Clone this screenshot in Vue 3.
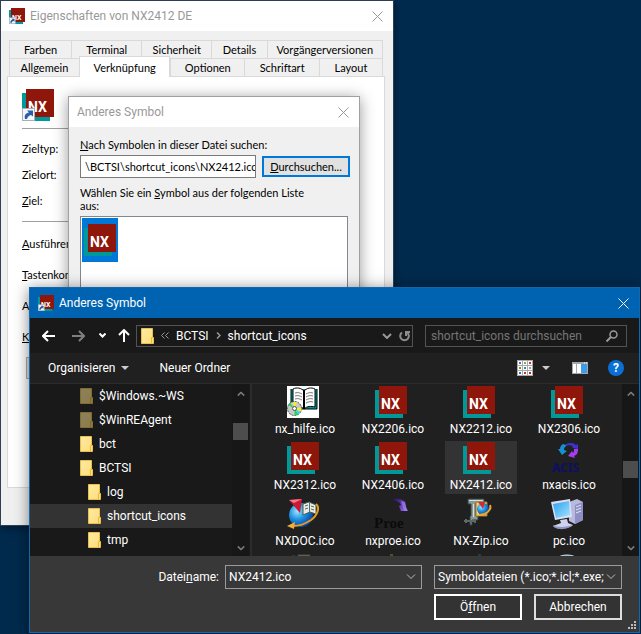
<template>
  <main class="desktop">
    <!-- 共用图标 -->
    <svg class="sprite" width="0" height="0" aria-hidden="true">
      <defs>
        <linearGradient id="folder-fill" x1="0" y1="0" x2="1" y2="1">
          <stop offset="0" stop-color="#ffeaa5" />
          <stop offset="1" stop-color="#ffdc78" />
        </linearGradient>
        <radialGradient id="globe-fill" cx="0.35" cy="0.35" r="0.7">
          <stop offset="0" stop-color="#9fe4ff" />
          <stop offset="0.5" stop-color="#1c8fe0" />
          <stop offset="1" stop-color="#0a3f94" />
        </radialGradient>
        <linearGradient id="screen-fill" x1="0" y1="0" x2="1" y2="1">
          <stop offset="0" stop-color="#2f9df0" />
          <stop offset="1" stop-color="#9fe6ff" />
        </linearGradient>
        <linearGradient id="purple-fill" x1="0" y1="0" x2="1" y2="1">
          <stop offset="0" stop-color="#23106a" />
          <stop offset="1" stop-color="#9a6cf0" />
        </linearGradient>
      </defs>
      <symbol id="nx" viewBox="0 0 32 32">
        <rect y="4" width="28" height="28" fill="#009999" />
        <rect x="4" width="28" height="28" fill="#8e160b" />
        <text x="6" y="23" font-family="Roboto, sans-serif" font-size="14" font-weight="700" fill="#fff">NX</text>
      </symbol>
      <symbol id="nx-link" viewBox="0 0 32 32">
        <use href="#nx" width="32" height="32" />
        <rect x="0.5" y="19.5" width="12" height="12" fill="#f4f6fa" stroke="#a9adb5" />
        <path d="M3 30c-1-4 1-6 4-6.500l-2-2h6v6l-2-1.500c-2 .5-3.500 2-4 4z" fill="#2a5ea8" />
      </symbol>
      <symbol id="folder" viewBox="0 0 13 16">
        <path d="M0.500 0.500h11v9h1v6h-12z" fill="url(#folder-fill)" stroke="#e8c04c" />
        <path d="M10.500 15.500v-6h2" fill="none" stroke="#e8b93c" />
      </symbol>
      <symbol id="help-book" viewBox="0 0 32 32">
        <rect width="32" height="32" fill="#fff" />
        <path d="M4 3v20h26V3" fill="#009999" stroke="#000" />
        <path d="M6 21V3c4-2 8-1 11 2 3-3 7-4 11-2v18c-4-1-8-1-11 2-3-3-7-3-11-2z" fill="#fff" stroke="#000" />
        <path d="M17 5v18" stroke="#000" stroke-width="2" />
        <path d="M8 7c3-1 5 0 7 1M8 10c3-1 5 0 7 1M8 13c3-1 5 0 7 1M19 8c2-1 4-2 7-1M19 11c2-1 4-2 7-1M19 14c2-1 4-2 7-1M19 17c2-1 4-2 7-1" fill="none" stroke="#777" />
        <circle cx="7.500" cy="22.500" r="7" fill="#c8c8c8" stroke="#444" stroke-dasharray="2 1" />
        <path d="M7.500 22.500L6 16l4 0zM7.500 22.500l7-1v4z" fill="#f4ee30" />
        <path d="M7.500 22.500L1 19l2-2zM7.500 22.500l4 6-4 1z" fill="#1fd650" />
        <path d="M7.500 22.500l6 4-2 2z" fill="#30d8e8" />
        <circle cx="7.500" cy="22.500" r="2" fill="#fff" stroke="#555" />
      </symbol>
      <symbol id="nxdoc" viewBox="0 0 32 32">
        <circle cx="14" cy="17" r="12" fill="url(#globe-fill)" />
        <path d="M2 2l13-1-2 14z" fill="#cf1733" />
        <path d="M2 2l13-1-8 4z" fill="#f27c8c" />
        <path d="M16 6l6-2 7 3v9l-6-2-7 3z" fill="#e9ecdf" stroke="#41614f" />
        <path d="M22.500 5v9M18 8l3-1M18 11l3-1M24 8l3 1M24 11l3 1" fill="none" stroke="#567" />
        <path d="M29 6c4 3 2 11-5 16-6 4-13 6-18 6" fill="none" stroke="#e79a23" stroke-width="2" />
        <path d="M0 28l8-4-1 7z" fill="#f3ad36" />
      </symbol>
      <symbol id="proe" viewBox="0 0 36 32">
        <path d="M20 1c5-1 10 0 12 3l1 5 2 4-7 0-2-5 2-1c-1-3-4-4-8-5z" fill="url(#purple-fill)" />
        <path d="M28 3l4 1 2 9-3 0z" fill="#a98af0" opacity="0.6" />
        <text x="1" y="30" font-family="'Liberation Serif', serif" font-size="15" font-weight="700" fill="#0b0b0b">Proe</text>
      </symbol>
      <symbol id="acis" viewBox="0 0 32 32">
        <path d="M15 3l-3-1c-2 1-3 3-3 5h-2l4 6 5-4-3-1c0-2 1-4 3-4z" fill="#1690d0" />
        <path d="M15 2c5-2 8-1 10 1l2-1v5l-6-1 1-1c-2-2-4-2-7-1z" fill="#3a35c8" />
        <path d="M23 7h4c0 4-1 6-4 7l1 2-7-2 4-5 1 2c1-1 1-2 1-4z" fill="#a43cf0" />
        <text x="1" y="30" font-family="'Noto Sans', sans-serif" font-size="12" font-weight="700" fill="#0d0f66">ACIS</text>
      </symbol>
      <symbol id="zip" viewBox="0 0 32 32">
        <path d="M5 1h16v4h-8v13h2v4H9v5H7v-9h1V6H5z" fill="#8c9797" stroke="#344" />
        <path d="M6 2.500h14M10.500 6v13" stroke="#d6dfde" />
        <path d="M1 23h12M3 21v4M12 21v4" stroke="#5d6868" stroke-width="2" />
        <path d="M13 4h11v14H13z" fill="#f4d169" stroke="#a07822" />
        <circle cx="20" cy="11" r="6" fill="url(#globe-fill)" />
        <path d="M15 4l7 0-2 7z" fill="#d12a38" />
        <path d="M27 7c2 5-4 10-11 10" fill="none" stroke="#f2a52c" stroke-width="2" />
      </symbol>
      <symbol id="pc" viewBox="0 0 32 32">
        <path d="M18 4l8-3 6 3v18l-8 4-6-3z" fill="#b7b9dd" />
        <path d="M24 7l8-3v18l-8 4z" fill="#8e90c3" />
        <path d="M25 9l5-2M25 12l5-2M25 15l5-2" stroke="#e4e5f8" />
        <path d="M0 4l19-3 2 18-17 3z" fill="#dcdff3" />
        <path d="M2 6l16-3 1 14-14 3z" fill="url(#screen-fill)" />
        <path d="M9 22l7-1 1 4 5 2c-3 4-17 5-20 1l8-3z" fill="#cfd2ec" />
        <path d="M2 27c4 3 15 2 19 0-3 5-17 6-19 0z" fill="#9193bd" />
      </symbol>
      <symbol id="close" viewBox="0 0 11 11">
        <path d="M0.500 0.500l10 10M10.500 0.500l-10 10" fill="none" stroke="currentColor" />
      </symbol>
      <symbol id="chevron" viewBox="0 0 10 6">
        <path d="M1 1l4 4 4-4" fill="none" stroke="currentColor" stroke-width="2" />
      </symbol>
      <symbol id="chevron-thin" viewBox="0 0 10 6">
        <path d="M1 0.500l4 4 4-4" fill="none" stroke="currentColor" />
      </symbol>
    </svg>

    <!-- 属性窗口 -->
    <section class="window props">
      <header class="titlebar">
        <svg class="app-icon" width="16" height="16"><use href="#nx-link" /></svg>
        <h1>Eigenschaften von NX2412 DE</h1>
        <button class="close" type="button" aria-label="Schließen">
          <svg width="11" height="11"><use href="#close" /></svg>
        </button>
      </header>
      <nav class="tabs">
        <div v-for="(row, i) in tabRows" :key="i" class="tab-row">
          <button
            v-for="tab in row"
            :key="tab.name"
            type="button"
            :style="{ flexGrow: tab.width }"
            :class="{ active: tab.name === activeTab }"
            @click="activeTab = tab.name"
          >{{ tab.name }}</button>
        </div>
      </nav>
      <div class="panel">
        <svg class="big-icon" width="32" height="32"><use href="#nx-link" /></svg>
        <div class="group">
          <p>Zieltyp:</p>
          <p>Zielort:</p>
          <p><u>Z</u>iel:</p>
        </div>
        <div class="group wide">
          <p><u>A</u>usführen</p>
          <p><u>T</u>astenkom</p>
          <p>A</p>
          <p><u>K</u></p>
        </div>
        <button class="path-button" type="button" aria-label="Dateipfad öffnen"></button>
      </div>
    </section>

    <!-- 更换图标 -->
    <section class="window symbol">
      <header class="titlebar">
        <h2>Anderes Symbol</h2>
        <button class="close" type="button" aria-label="Schließen">
          <svg width="11" height="11"><use href="#close" /></svg>
        </button>
      </header>
      <div class="symbol-body">
        <label for="icon-file"><u>N</u>ach Symbolen in dieser Datei suchen:</label>
        <div class="file-row">
          <input id="icon-file" v-model="iconPath" type="text" />
          <button type="button"><u>D</u>urchsuchen...</button>
        </div>
        <p>Wählen Sie ein <u>S</u>ymbol aus der folgenden Liste aus:</p>
        <div class="icon-list">
          <button type="button" aria-label="NX"><svg width="32" height="32"><use href="#nx" /></svg></button>
        </div>
      </div>
    </section>

    <!-- 文件选择 -->
    <section class="window picker">
      <header class="titlebar">
        <svg class="app-icon" width="16" height="16"><use href="#nx-link" /></svg>
        <h2>Anderes Symbol</h2>
        <button class="close" type="button" aria-label="Schließen">
          <svg width="11" height="11"><use href="#close" /></svg>
        </button>
      </header>

      <div class="navbar">
        <button type="button" aria-label="Zurück">
          <svg width="13" height="12" viewBox="0 0 13 12"><path d="M6 1L1 6l5 5M1 6h12" fill="none" stroke="#fff" stroke-width="2" /></svg>
        </button>
        <button type="button" aria-label="Vorwärts">
          <svg width="13" height="12" viewBox="0 0 13 12"><path d="M7 1l5 5-5 5M12 6H0" fill="none" stroke="#808080" stroke-width="2" /></svg>
        </button>
        <button class="recent" type="button" aria-label="Zuletzt besucht">
          <svg width="7" height="5" viewBox="0 0 7 5"><path d="M0.500 0.500l3 3 3-3" fill="none" stroke="#fff" stroke-width="2" /></svg>
        </button>
        <button type="button" aria-label="Nach oben">
          <svg width="12" height="13" viewBox="0 0 12 13"><path d="M1 6l5-5 5 5M6 1v12" fill="none" stroke="#fff" stroke-width="2" /></svg>
        </button>
        <div class="address">
          <svg width="13" height="16"><use href="#folder" /></svg>
          <svg width="8" height="7" viewBox="0 0 8 7"><path d="M3.500 0.500l-3 3 3 3M7.500 0.500l-3 3 3 3" fill="none" stroke="#999" /></svg>
          <a href="#">BCTSI</a>
          <svg width="5" height="7" viewBox="0 0 5 7"><path d="M1 0.500l3 3-3 3" fill="none" stroke="#999" stroke-width="1.500" /></svg>
          <a href="#">shortcut_icons</a>
          <svg class="drop" width="10" height="6"><use href="#chevron" /></svg>
          <button class="reload" type="button" aria-label="Aktualisieren">
            <svg width="11" height="12" viewBox="0 0 11 12"><path d="M3 2.500a4.300 4.300 0 1 0 5 0M7 6V2h4" fill="none" stroke="#8c8c8c" stroke-width="2" /></svg>
          </button>
        </div>
        <div class="search">
          <input type="search" placeholder="shortcut_icons durchsuchen" aria-label="shortcut_icons durchsuchen" />
          <svg width="12" height="12" viewBox="0 0 12 12"><circle cx="7.500" cy="4.500" r="3.500" fill="none" stroke="#999" stroke-width="1.500" /><path d="M5 7L0.500 11.500" stroke="#999" stroke-width="2" /></svg>
        </div>
      </div>

      <div class="toolbar">
        <button type="button">Organisieren <i class="caret"></i></button>
        <button class="new-folder" type="button">Neuer Ordner</button>
        <button class="view" type="button" aria-label="Ansicht">
          <svg width="16" height="16" viewBox="0 0 16 16">
            <rect width="16" height="16" fill="#aaa" />
            <g v-for="(color, i) in viewDots" :key="i">
              <rect :x="1 + (i % 3) * 5" :y="1 + Math.floor(i / 3) * 5" width="4" height="4" fill="#fff" />
              <rect :x="2 + (i % 3) * 5" :y="2 + Math.floor(i / 3) * 5" width="2" height="2" :fill="color" />
            </g>
          </svg>
          <i class="caret"></i>
        </button>
        <button class="preview" type="button" aria-label="Vorschaufenster">
          <svg width="16" height="12" viewBox="0 0 16 12"><rect width="16" height="12" fill="#a3a8ad" /><rect x="1" y="2" width="3" height="9" fill="#fff" /><rect x="5" y="2" width="4" height="9" fill="#fff" /><rect x="9" y="2" width="6" height="9" fill="#3d9be9" /><path d="M12 1h3" stroke="#fff" stroke-dasharray="1 1" /></svg>
        </button>
        <button type="button" class="help" aria-label="Hilfe">?</button>
      </div>

      <div class="content">
        <ul class="tree">
          <li v-for="node in tree" :key="node.name" :class="{ child: node.child, faded: node.faded, selected: node.name === folder }" @click="folder = node.name">
            <svg width="13" height="16"><use href="#folder" /></svg>
            <span>{{ node.name }}</span>
          </li>
        </ul>
        <div class="scrollbar tree-scroll">
          <svg class="up" width="8" height="6" viewBox="0 0 10 6"><use href="#chevron" width="10" height="6" /></svg>
          <span class="thumb"></span>
          <svg width="8" height="6" viewBox="0 0 10 6"><use href="#chevron" width="10" height="6" /></svg>
        </div>
        <ul class="files">
          <li v-for="file in files" :key="file.name" :class="{ selected: file.name === fileName }" @click="fileName = file.name">
            <svg :width="file.icon === 'proe' ? 36 : 32" height="32"><use :href="'#' + file.icon" /></svg>
            <span>{{ file.name }}</span>
          </li>
          <!-- 下一行只露出顶部 -->
          <li class="peek"><svg width="22" height="4" viewBox="0 0 22 4"><path d="M0 2h3M6 1h12v3H6z" fill="#76795a" stroke="#4b4d3f" /></svg></li>
          <li class="peek"><svg width="3" height="4" viewBox="0 0 3 4"><path d="M0 1h3" stroke="#8c8420" /></svg></li>
          <li class="peek"><svg width="3" height="4" viewBox="0 0 3 4"><path d="M0 1h3" stroke="#176a54" /></svg></li>
          <li class="peek"><svg width="18" height="4" viewBox="0 0 18 4"><path d="M0 4c2-4 16-4 18 0z" fill="#6ba6c8" stroke="#c8d8e0" /></svg></li>
        </ul>
        <div class="scrollbar file-scroll">
          <svg class="up" width="8" height="6" viewBox="0 0 10 6"><use href="#chevron" width="10" height="6" /></svg>
          <span class="thumb"></span>
          <svg width="8" height="6" viewBox="0 0 10 6"><use href="#chevron" width="10" height="6" /></svg>
        </div>
      </div>

      <footer class="bottom">
        <div class="name-row">
          <label for="file-name">Datei<u>n</u>ame:</label>
          <div class="combo">
            <input id="file-name" v-model="fileName" type="text" />
            <svg width="10" height="6"><use href="#chevron-thin" /></svg>
          </div>
          <div class="combo filter">
            <select aria-label="Dateityp">
              <option>Symboldateien (*.ico;*.icl;*.exe;</option>
            </select>
            <svg width="10" height="6"><use href="#chevron-thin" /></svg>
          </div>
        </div>
        <div class="actions">
          <button class="default" type="button">Ö<u>f</u>fnen</button>
          <button type="button">Abbrechen</button>
        </div>
        <svg class="grip" width="8" height="8" viewBox="0 0 8 8"><path d="M6 0h2v2H6zM3 3h2v2H3zM6 3h2v2H6zM0 6h2v2H0zM3 6h2v2H3zM6 6h2v2H6z" fill="#bbb" /></svg>
      </footer>
    </section>
  </main>
</template>

<script setup>
import { ref } from 'vue'

const activeTab = ref('Verknüpfung')
const folder = ref('shortcut_icons')
const fileName = ref('NX2412.ico')
const iconPath = ref('\\BCTSI\\shortcut_icons\\NX2412.ico')

const tabRows = [
  [
    { name: 'Farben', width: 62 },
    { name: 'Terminal', width: 70 },
    { name: 'Sicherheit', width: 70 },
    { name: 'Details', width: 55 },
    { name: 'Vorgängerversionen', width: 116 },
  ],
  [
    { name: 'Allgemein', width: 70 },
    { name: 'Verknüpfung', width: 91 },
    { name: 'Optionen', width: 74 },
    { name: 'Schriftart', width: 75 },
    { name: 'Layout', width: 63 },
  ],
]

const tree = [
  { name: '$Windows.~WS', faded: true },
  { name: '$WinREAgent', faded: true },
  { name: 'bct' },
  { name: 'BCTSI' },
  { name: 'log', child: true },
  { name: 'shortcut_icons', child: true },
  { name: 'tmp', child: true },
]

const files = [
  { name: 'nx_hilfe.ico', icon: 'help-book' },
  { name: 'NX2206.ico', icon: 'nx' },
  { name: 'NX2212.ico', icon: 'nx' },
  { name: 'NX2306.ico', icon: 'nx' },
  { name: 'NX2312.ico', icon: 'nx' },
  { name: 'NX2406.ico', icon: 'nx' },
  { name: 'NX2412.ico', icon: 'nx' },
  { name: 'nxacis.ico', icon: 'acis' },
  { name: 'NXDOC.ico', icon: 'nxdoc' },
  { name: 'nxproe.ico', icon: 'proe' },
  { name: 'NX-Zip.ico', icon: 'zip' },
  { name: 'pc.ico', icon: 'pc' },
]

const viewDots = ['#3b7dc4', '#8aa35a', '#c0392b', '#8a8a3a', '#2f8f8f', '#7f9fbf', '#3b6db4', '#c0392b', '#b03020']
</script>

<style>
body {
  margin: 0;
  background: #002a4d;
}
</style>

<style scoped>
.desktop {
  position: relative;
  min-height: 100vh;
  overflow: hidden;
  background: #002a4d;
  font: 12px/16px Roboto, "Open Sans", sans-serif;
}

.sprite {
  position: absolute;
}

* {
  box-sizing: border-box;
}

svg {
  display: block;
  flex-shrink: 0;
}

p,
h1,
h2,
ul {
  margin: 0;
  padding: 0;
}

button,
input,
select {
  margin: 0;
  padding: 0;
  border: 0;
  border-radius: 0;
  background: none;
  color: inherit;
  font: inherit;
  outline: 0;
}

/* 窗口 */
.window {
  position: absolute;
  display: flex;
  flex-direction: column;
}

.titlebar {
  display: flex;
  align-items: center;
  height: 30px;
  padding: 0 10px 0 8px;
  gap: 5px;
  background: #fff;
  color: #999;
}

.titlebar h1,
.titlebar h2 {
  flex: 1;
  font-size: 12px;
  font-weight: 400;
}

.close {
  display: flex;
}

/* 属性窗口 */
.props {
  top: 0;
  left: 0;
  width: 394px;
  height: 526px;
  border: 1px solid #2b4057;
  background: #f0f0f0;
  color: #000;
  box-shadow: 0 2px 8px rgba(0, 0, 0, 0.4);
}

.tabs {
  padding: 9px 10px 0 8px;
  font: 11px/17px Lato, Roboto, sans-serif;
}

.tab-row {
  display: flex;
  height: 18px;
}

.tab-row button {
  flex: 1 1 0;
  min-width: 0;
  border: 1px solid #d9d9d9;
  border-width: 1px 0 0 1px;
  white-space: nowrap;
}

.tab-row button:last-child {
  border-right-width: 1px;
}

.tab-row .active {
  height: 21px;
  margin-top: -2px;
  z-index: 1;
  border-right-width: 1px;
  background: #fff;
}

.panel {
  flex: 1;
  margin: 0 8px 37px 6px;
  padding: 12px 30px 0 14px;
  border: 1px solid #d9d9d9;
  background: #fff;
  font: 11px/14px Lato, Roboto, sans-serif;
}

.group {
  display: grid;
  gap: 12px;
  margin-top: 7px;
  padding: 13px 0;
  border-top: 1px solid #a0a0a0;
}

.group.wide {
  gap: 17px;
  margin-top: 0;
  padding-top: 15px;
}

.path-button {
  width: 90px;
  height: 22px;
  margin-left: 4px;
  border: 1px solid #adadad;
  background: #e1e1e1;
}

/* 更换图标 */
.symbol {
  top: 96px;
  left: 68px;
  width: 292px;
  height: 220px;
  border: 1px solid #a0a0a0;
  background: #f0f0f0;
  color: #000;
  box-shadow: 0 2px 14px rgba(0, 0, 0, 0.4);
}

.symbol-body {
  display: flex;
  flex: 1;
  flex-direction: column;
  padding: 11px 9px 0 11px;
  font: 11px/13px Lato, Roboto, sans-serif;
}

.file-row {
  display: flex;
  align-items: center;
  gap: 6px;
  margin: 4px 0 8px;
}

.file-row input {
  flex: 1;
  min-width: 0;
  height: 23px;
  padding: 0 0 0 4px;
  border: 1px solid #7a7a7a;
  background: #fff;
}

.file-row button {
  width: 88px;
  height: 21px;
  border: 2px solid #0078d7;
  background: #e1e1e1;
}

.symbol-body p {
  padding-right: 40px;
}

.icon-list {
  flex: 1;
  margin: 4px 2px 0 0;
  padding: 1px;
  border: 1px solid #828790;
  background: #fff;
}

.icon-list button {
  display: block;
  padding: 6px 2px;
  background: #0078d7;
}

/* 文件选择 */
.picker {
  top: 287px;
  right: 1px;
  left: 29px;
  border: 1px solid #0f68b2;
  background: #191919;
  color: #fff;
  box-shadow: 0 2px 14px rgba(0, 0, 0, 0.5);
}

.picker .titlebar {
  background: #0063b1;
  color: #fff;
}

.navbar {
  display: flex;
  align-items: center;
  height: 35px;
  padding: 0 12px;
}

.navbar > button {
  display: flex;
  margin-right: 17px;
}

.navbar > .recent {
  margin: 0 12px 0 -3px;
}

.navbar > button:nth-child(4) {
  margin-right: 6px;
}

.address,
.search {
  display: flex;
  align-items: center;
  height: 22px;
  border: 1px solid #535353;
}

.address {
  flex: 1;
  gap: 7px;
  padding: 0 2px 0 4px;
}

.address a {
  color: #fff;
  text-decoration: none;
}

.drop {
  margin-left: auto;
  color: #999;
}

.search {
  width: 202px;
  margin-left: 12px;
  padding: 0 8px 0 5px;
}

.search input {
  flex: 1;
  min-width: 0;
  appearance: none;
}

.search input::placeholder {
  color: #757575;
  opacity: 1;
}

.toolbar {
  display: flex;
  align-items: center;
  height: 31px;
  padding: 0 15px 0 18px;
  border-bottom: 1px solid #2b2b2b;
  background: #202020;
}

.toolbar button {
  display: flex;
  align-items: center;
  gap: 6px;
}

.caret {
  border: 4px solid transparent;
  border-top-color: #ccc;
  border-bottom-width: 0;
}

.toolbar .new-folder {
  margin: 0 auto 0 30px;
}

.toolbar .view {
  gap: 9px;
  margin-right: 22px;
}

.toolbar .preview {
  margin-right: 20px;
}

.toolbar .help {
  justify-content: center;
  width: 16px;
  height: 16px;
  border-radius: 50%;
  background: #0a6fd6;
  font-weight: 700;
}

.content {
  display: flex;
  height: 172px;
}

.tree {
  width: 202px;
  list-style: none;
}

.tree li {
  display: flex;
  align-items: center;
  gap: 6px;
  height: 24px;
  padding-left: 50px;
}

.tree .child {
  padding-left: 58px;
}

.tree .selected {
  background: #333;
}

.tree .faded svg {
  opacity: 0.5;
}

.scrollbar {
  display: flex;
  flex-direction: column;
  align-items: center;
  width: 17px;
  padding: 7px 0 5px;
  background: #171717;
  color: #777;
}

.scrollbar .up {
  transform: rotate(180deg);
}

.thumb {
  width: 15px;
  height: 17px;
  margin: 26px 0 auto;
  background: #4d4d4d;
}

.file-scroll .thumb {
  margin-top: 64px;
}

.files {
  display: grid;
  flex: 1;
  grid-template-columns: repeat(auto-fill, 72px);
  grid-auto-rows: 53px;
  gap: 3px 16px;
  margin-left: 1px;
  padding: 1px 0 0 17px;
  overflow: hidden;
  border-left: 2px solid #2b2b2b;
  background: #202020;
  list-style: none;
}

.files li {
  display: flex;
  flex-direction: column;
  align-items: center;
  gap: 2px;
  padding-top: 1px;
}

.files li svg {
  margin-right: 4px;
}

.files .selected {
  background: #333;
}

.files span {
  line-height: 18px;
}

.bottom {
  position: relative;
  display: grid;
  gap: 5px;
  padding: 9px 17px 12px;
  background: #383838;
}

.name-row,
.actions {
  display: flex;
  align-items: center;
  justify-content: flex-end;
  gap: 12px;
}

.name-row label {
  margin-right: -6px;
}

.combo {
  display: flex;
  align-items: center;
  width: 197px;
  height: 24px;
  padding: 0 5px 0 3px;
  border: 1px solid #9b9b9b;
}

.combo.filter {
  width: 188px;
}

.combo input,
.combo select {
  flex: 1;
  min-width: 0;
  appearance: none;
}

.combo svg {
  color: #bbb;
}

.actions button {
  width: 88px;
  height: 26px;
  border: 2px solid #ddd;
  background: #333;
}

.actions .default {
  border-color: #fff;
}

.grip {
  position: absolute;
  right: 3px;
  bottom: 3px;
}
</style>
